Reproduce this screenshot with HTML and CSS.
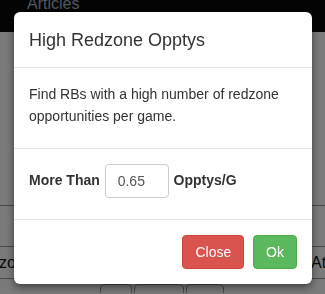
FILE: index.html
```html
<!DOCTYPE html>
<html lang="en">

<head>
    <meta charset="UTF-8" />
    <title>High Redzone Opptys</title>
    <link rel="stylesheet" href="styles.css">
</head>

<body>
    <div class="navbar">
        <span class="nav-link">Articles</span>
    </div>

    <div class="page">
        <div class="table-row head-row"></div>
        <div class="table-row stat-row">
            <span class="cell-left">zo</span>
            <span class="cell-right">Att</span>
        </div>
        <div class="table-row filter-row">
            <span class="chip chip-a"></span>
            <span class="chip chip-b"></span>
            <span class="chip chip-c"></span>
        </div>
    </div>

    <div class="backdrop"></div>

    <div class="modal">
        <div class="modal-header">
            <h4 class="modal-title">High Redzone Opptys</h4>
        </div>
        <div class="modal-body">
            <p>Find RBs with a high number of redzone opportunities per game.</p>
        </div>
        <div class="modal-body form-row">
            <label>More Than <input type="text" value="0.65" class="form-control" /> Opptys/G</label>
        </div>
        <div class="modal-footer">
            <button class="btn btn-danger">Close</button>
            <button class="btn btn-success">Ok</button>
        </div>
    </div>
</body>

</html>
```

FILE: styles.css
```css
body {
    margin: 0;
    background-color: #fff;
    font-family: "Liberation Sans", Arial, Helvetica, sans-serif;
    font-size: 14px;
    color: #333;
    overflow: hidden;
    height: 294px;
}

.navbar {
    background-color: #0a0a0a;
    height: 32px;
    padding-left: 27px;
    overflow: hidden;
}

.nav-link {
    display: block;
    font-size: 16px;
    line-height: 16px;
    margin-top: -4px;
    color: #a6b4c4;
}

.page {
    padding-top: 173px;
}

.table-row {
    border-top: 1px solid #999;
    display: flex;
    justify-content: space-between;
    font-size: 16px;
    color: #111;
}

.head-row {
    height: 40px;
}

.stat-row {
    height: 31px;
    align-items: center;
    overflow: hidden;
}

.cell-left {
    margin-left: -1px;
}

.cell-right {
    width: 14px;
    overflow: hidden;
    white-space: nowrap;
}

.filter-row {
    height: 15px;
    overflow: hidden;
    justify-content: flex-start;
    padding-top: 5px;
    box-sizing: border-box;
}

.chip {
    display: block;
    height: 20px;
    border: 1px solid #999;
    border-radius: 4px;
}

.chip-a {
    margin-left: 100px;
    width: 30px;
}

.chip-b {
    margin-left: 2px;
    width: 48px;
}

.chip-c {
    margin-left: 2px;
    width: 36px;
}

.backdrop {
    position: fixed;
    top: 0;
    left: 0;
    right: 0;
    bottom: 0;
    background-color: rgba(0, 0, 0, 0.52);
}

.modal {
    position: fixed;
    top: 12px;
    left: 14px;
    width: 298px;
    background-color: #fff;
    border-radius: 6px;
    box-shadow: 0 3px 9px rgba(0, 0, 0, 0.5);
}

.modal-header {
    padding: 15px 15px 14px;
    border-bottom: 1px solid #e5e5e5;
}

.modal-title {
    margin: 0;
    font-size: 18px;
    font-weight: 500;
    line-height: 26px;
}

.modal-body {
    padding: 15px;
    border-bottom: 1px solid #e5e5e5;
    line-height: 22px;
}

.modal-body p {
    margin: 0 0 6px;
}

.form-row {
    padding-bottom: 21px;
}

.form-row label {
    font-weight: bold;
}

.form-control {
    width: 64px;
    height: 34px;
    box-sizing: border-box;
    padding: 6px 12px;
    border: 1px solid #ccc;
    border-radius: 4px;
    font-family: inherit;
    font-size: 14px;
    color: #555;
    vertical-align: middle;
    margin: 0 1px;
}

.modal-footer {
    padding: 15px;
    text-align: right;
}

.btn {
    height: 34px;
    padding: 6px 12px;
    border: 1px solid transparent;
    border-radius: 4px;
    font-family: inherit;
    font-size: 14px;
    color: #fff;
}

.btn + .btn {
    margin-left: 5px;
}

.btn-danger {
    background-color: #d9534f;
    border-color: #d43f3a;
}

.btn-success {
    background-color: #5cb85c;
    border-color: #4cae4c;
}
```
